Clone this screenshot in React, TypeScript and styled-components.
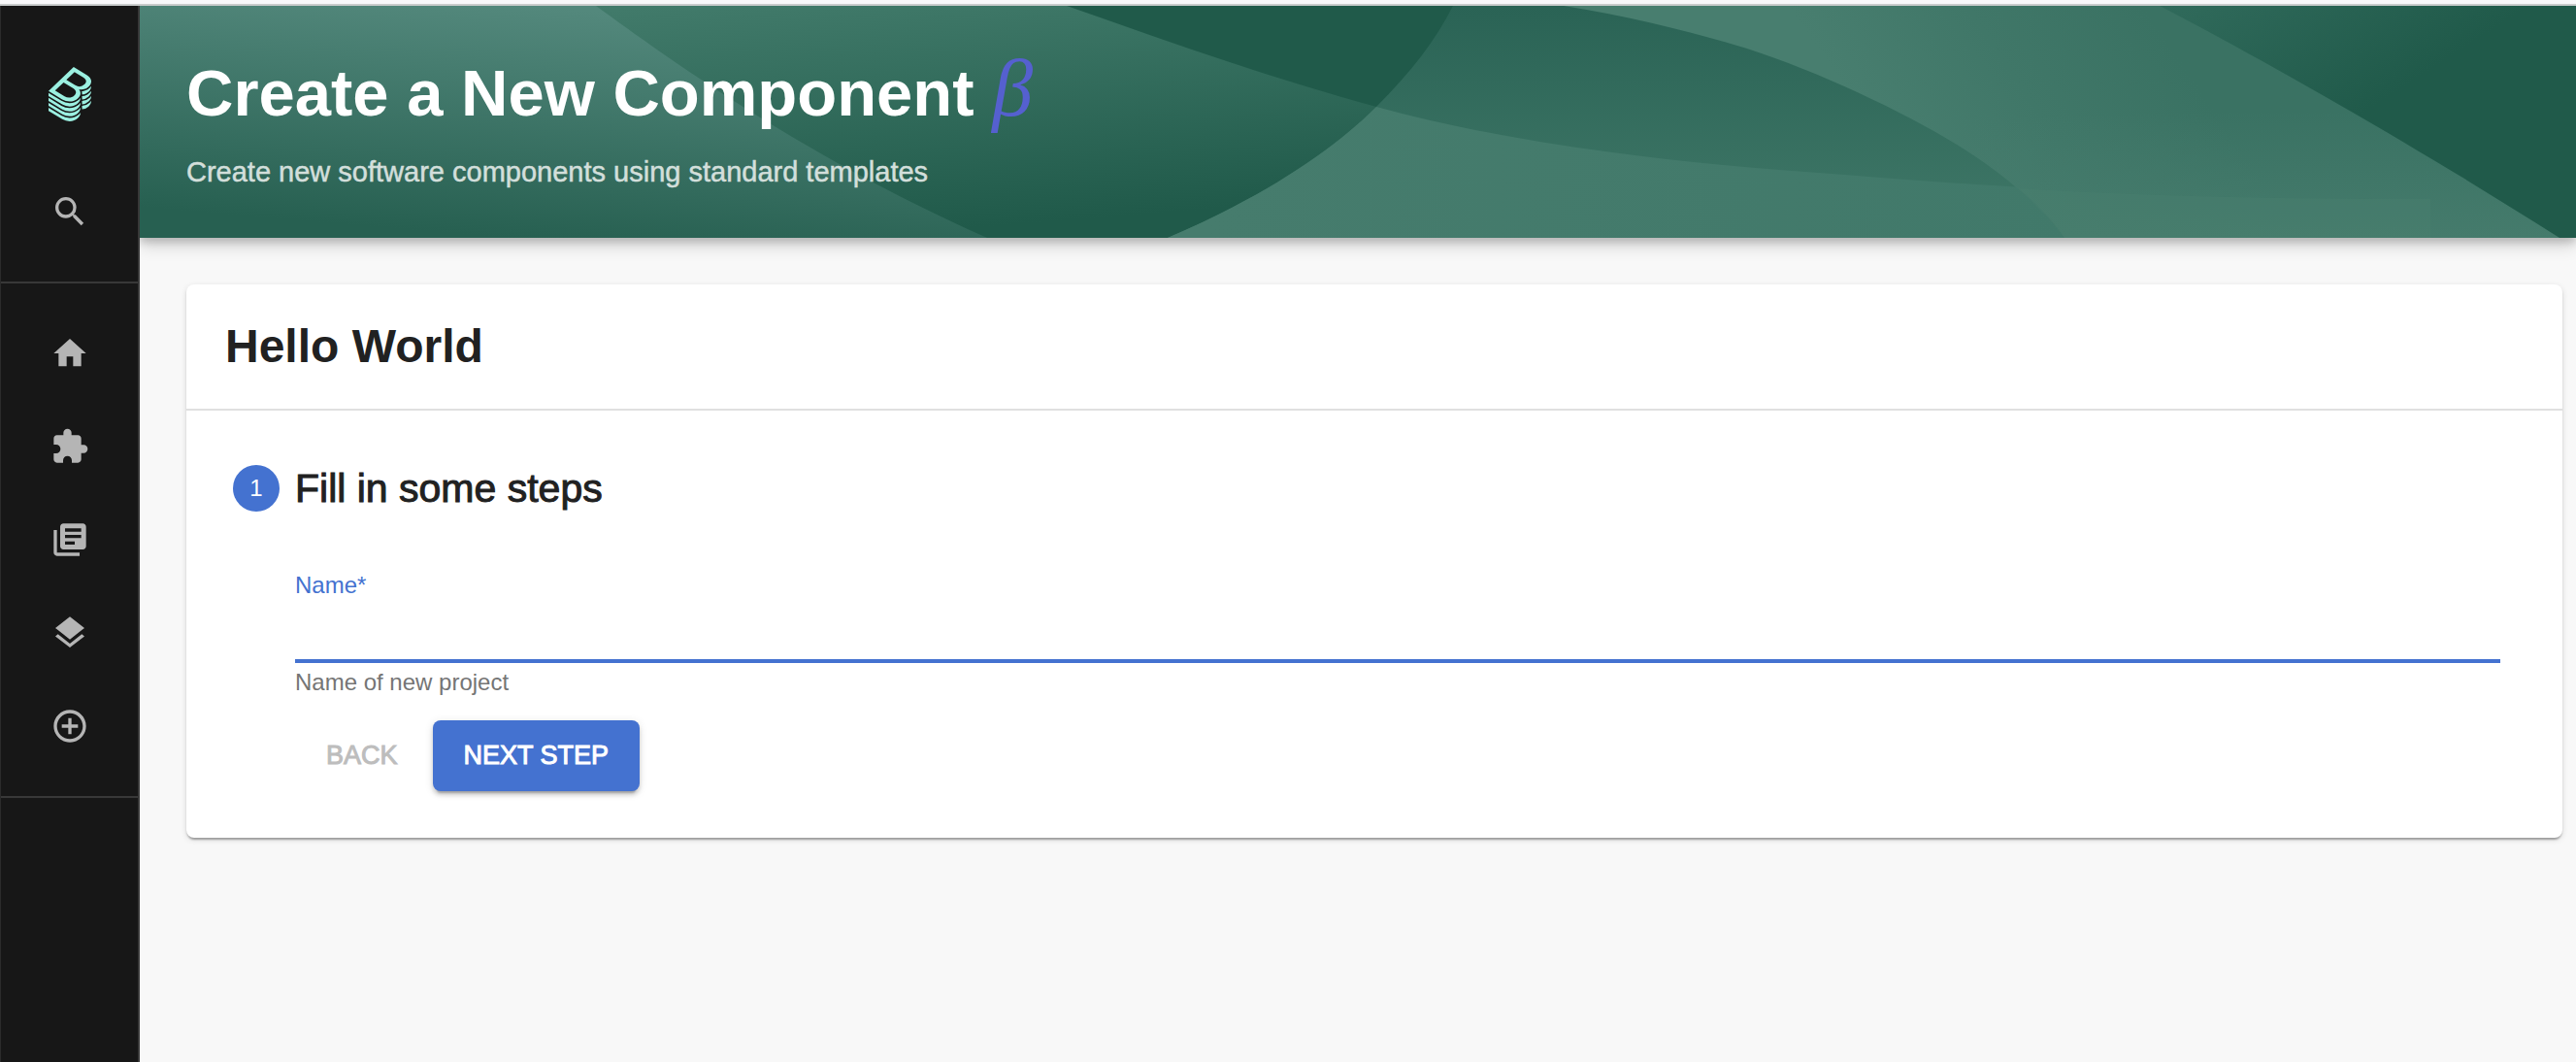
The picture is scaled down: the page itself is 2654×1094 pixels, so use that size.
import React, { useState } from "react";
import styled, { createGlobalStyle } from "styled-components";
import {
  MdSearch,
  MdHome,
  MdExtension,
  MdLibraryBooks,
  MdLayers,
  MdAddCircleOutline,
} from "react-icons/md";

const GlobalStyle = createGlobalStyle`
  * { box-sizing: border-box; }
  body {
    margin: 0;
    background: #f8f8f8;
    color: #212121;
    font-family: "Liberation Sans", Helvetica, Arial, sans-serif;
  }
`;

const Shell = styled.div`
  display: flex;
  flex-direction: column;
  min-height: 100vh;
`;

const WindowEdge = styled.div`
  height: 6px;
  background: #f8f8fa;
  border-bottom: 2px solid #c9cccc;
`;

const Layout = styled.div`
  flex: 1;
  display: flex;
`;

const Sidebar = styled.nav`
  flex: none;
  width: 144px;
  display: flex;
  flex-direction: column;
  background: #171717;
  border-left: 1px solid #2b2b2b;
  border-right: 2px solid #383838;
`;

const LogoLink = styled.a`
  display: flex;
  justify-content: center;
  height: 164px;
  padding-top: 63px;
`;

const NavList = styled.ul`
  list-style: none;
  margin: 0;
  padding: 0 0 24px;
  border-bottom: 2px solid #383838;

  & + & {
    padding-top: 24px;
  }
`;

const NavLink = styled.a`
  display: flex;
  align-items: center;
  justify-content: center;
  height: 96px;
  color: #b5b5b5;
  font-size: 40px;
`;

const Page = styled.main`
  flex: 1;
  min-width: 0;
  overflow: hidden;
`;

const Banner = styled.header`
  position: relative;
  padding: 50px 48px;
  background: #205a4a;
  box-shadow: 0 4px 8px rgba(0, 0, 0, 0.16), 0 8px 16px rgba(0, 0, 0, 0.16);
`;

const BannerArt = styled.svg`
  position: absolute;
  inset: 0;
  width: 100%;
  height: 100%;
`;

const BannerText = styled.div`
  position: relative;
  display: flex;
  flex-direction: column;
  gap: 23px;
`;

const BannerTitle = styled.h1`
  margin: 0;
  color: #fff;
  font-size: 67px;
  line-height: 80px;
  font-weight: 700;
`;

const Beta = styled.span`
  color: #5560cf;
  font: italic 400 84px/0 "Liberation Serif", "Times New Roman", serif;
`;

const BannerSubtitle = styled.p`
  margin: 0;
  color: #d3dfdb;
  font-size: 29px;
  line-height: 36px;
  -webkit-text-stroke: 0.5px currentColor;
`;

const Content = styled.div`
  padding: 48px 14px 48px 48px;
`;

const Card = styled.section`
  background: #fff;
  border-radius: 8px;
  box-shadow: 0 4px 2px -2px rgba(0, 0, 0, 0.2), 0 2px 2px rgba(0, 0, 0, 0.14),
    0 2px 6px rgba(0, 0, 0, 0.12);
`;

const CardHeader = styled.div`
  padding: 36px 40px;
  border-bottom: 2px solid #e0e0e0;
`;

const CardTitle = styled.h2`
  margin: 0;
  font-size: 48px;
  line-height: 56px;
  font-weight: 700;
`;

const Step = styled.div`
  padding: 56px 64px 48px 48px;
`;

const StepLabel = styled.div`
  display: flex;
  align-items: center;
  gap: 16px;
`;

const StepNumber = styled.span`
  width: 48px;
  height: 48px;
  border-radius: 50%;
  background: #4472d0;
  color: #fff;
  font-size: 24px;
  line-height: 48px;
  text-align: center;
`;

const StepTitle = styled.h3`
  margin: 0;
  font-size: 41px;
  line-height: 48px;
  font-weight: 400;
  -webkit-text-stroke: 1px currentColor;
`;

const StepForm = styled.form`
  display: flex;
  flex-direction: column;
  margin-left: 64px;
  padding-top: 62px;
`;

const FieldLabel = styled.label`
  color: #4472d0;
  font-size: 24px;
  line-height: 28px;
`;

const TextInput = styled.input`
  width: 100%;
  height: 66px;
  padding: 8px 0;
  border: 0;
  border-bottom: 4px solid #4472d0;
  outline: 0;
  background: none;
  color: #212121;
  font: inherit;
  font-size: 32px;
`;

const HelperText = styled.p`
  margin: 6px 0 0;
  color: #757575;
  font-size: 24px;
  line-height: 28px;
`;

const Actions = styled.div`
  display: flex;
  gap: 4px;
  margin-top: 25px;
`;

const Button = styled.button<{ $primary?: boolean }>`
  height: 73px;
  padding: 0 32px;
  border: 0;
  border-radius: 8px;
  background: ${(p) => (p.$primary ? "#4472d0" : "transparent")};
  color: ${(p) => (p.$primary ? "#fff" : "#bdbdbd")};
  box-shadow: ${(p) =>
    p.$primary
      ? "0 6px 2px -4px rgba(0,0,0,.2), 0 4px 4px rgba(0,0,0,.14), 0 2px 10px rgba(0,0,0,.12)"
      : "none"};
  font-family: inherit;
  font-size: 27px;
  text-transform: uppercase;
  -webkit-text-stroke: 1px currentColor;
`;

const Logo = () => (
  <svg width="44" height="56" viewBox="0 0 337.46 428.5" fill="#9bf0e1" aria-hidden="true">
    <path d="M303,166.05a80.69,80.69,0,0,0,13.45-10.37c.79-.77,1.55-1.53,2.3-2.3a83.12,83.12,0,0,0,7.93-9.38A63.69,63.69,0,0,0,333,133.23a48.58,48.58,0,0,0,4.35-16.4c1.49-19.39-10-38.67-35.62-54.22L198.56,0,78.3,115.23,0,190.25l108.6,65.91a111.59,111.59,0,0,0,57.76,16.41c24.92,0,48.8-8.8,66.42-25.69,19.16-18.36,25.52-42.12,13.7-61.87a49.22,49.22,0,0,0-6.8-8.87A89.17,89.17,0,0,0,259,178.29h.15a85.08,85.08,0,0,0,31-5.79A80.88,80.88,0,0,0,303,166.05ZM202.45,225.86c-19.32,18.51-50.4,21.23-75.7,5.9L51.61,186.15l67.45-64.64,76.41,46.38C223,184.58,221.49,207.61,202.45,225.86Zm8.93-82.22-70.65-42.89L205.14,39,274.51,81.1c25.94,15.72,29.31,37,10.55,55A60.69,60.69,0,0,1,211.38,143.64Zm29.86,190c-19.57,18.75-46.17,29.09-74.88,29.09a123.73,123.73,0,0,1-64.1-18.2L0,282.52v24.67L108.6,373.1a111.6,111.6,0,0,0,57.76,16.42c24.92,0,48.8-8.81,66.42-25.69,12.88-12.34,20-27.13,19.68-41.49v-1.79A87.27,87.27,0,0,1,241.24,333.68Zm0-39c-19.57,18.75-46.17,29.08-74.88,29.08a123.81,123.81,0,0,1-64.1-18.19L0,243.53v24.68l108.6,65.91a111.6,111.6,0,0,0,57.76,16.42c24.92,0,48.8-8.81,66.42-25.69,12.88-12.34,20-27.13,19.68-41.5v-1.78A87.27,87.27,0,0,1,241.24,294.7Zm0-39c-19.57,18.76-46.17,29.09-74.88,29.09a123.81,123.81,0,0,1-64.1-18.19L0,204.55v24.68l108.6,65.91a111.59,111.59,0,0,0,57.76,16.41c24.92,0,48.8-8.8,66.42-25.68,12.88-12.35,20-27.13,19.68-41.5v-1.82A86.09,86.09,0,0,1,241.24,255.71Zm83.7,25.74a94.15,94.15,0,0,1-60.2,25.86h0V334a81.6,81.6,0,0,0,51.74-22.37c14-13.38,21.14-28.11,21-42.64v-2.19A94.92,94.92,0,0,1,324.94,281.45Zm-83.7,91.21c-19.57,18.76-46.17,29.09-74.88,29.09a123.73,123.73,0,0,1-64.1-18.2L0,321.5v24.68l108.6,65.9a111.6,111.6,0,0,0,57.76,16.42c24.92,0,48.8-8.8,66.42-25.69,12.88-12.34,20-27.13,19.68-41.49v-1.79A86.29,86.29,0,0,1,241.24,372.66ZM327,162.45c-.68.69-1.35,1.38-2.05,2.06a94.37,94.37,0,0,1-10.64,8.65,91.35,91.35,0,0,1-11.6,7,94.53,94.53,0,0,1-26.24,8.71,97.69,97.69,0,0,1-14.16,1.57c.5,1.61.9,3.25,1.25,4.9a53.27,53.27,0,0,1,1.14,12V217h.05a84.41,84.41,0,0,0,25.35-5.55,81,81,0,0,0,26.39-16.82c.8-.77,1.5-1.56,2.26-2.34a82.08,82.08,0,0,0,7.93-9.38A63.76,63.76,0,0,0,333,172.17a48.55,48.55,0,0,0,4.32-16.45c.09-1.23.2-2.47.19-3.7V150q-1.08,1.54-2.25,3.09A96.73,96.73,0,0,1,327,162.45Zm0,77.92c-.69.7-1.31,1.41-2,2.1a94.2,94.2,0,0,1-60.2,25.86h0V295h0a81.65,81.65,0,0,0,51.74-22.37,73.51,73.51,0,0,0,16.48-22.86,48.56,48.56,0,0,0,4.32-16.44c.09-1.24.2-2.47.19-3.7v-2.19c-.74,1.07-1.46,2.15-2.27,3.21A94.68,94.68,0,0,1,327,240.37Zm0-39c-.69.7-1.31,1.41-2,2.1a93.18,93.18,0,0,1-10.63,8.65,91.63,91.63,0,0,1-11.63,7,95.47,95.47,0,0,1-37.94,10.18h0V256h0a81.65,81.65,0,0,0,51.74-22.37,73.51,73.51,0,0,0,16.48-22.85A48.56,48.56,0,0,0,337.39,194.37c.09-1.24.2-2.48.19-3.71v-2.19c-.74,1.07-1.46,2.15-2.27,3.21A96,96,0,0,1,327,201.43Z" />
  </svg>
);

const BannerWaves = () => (
  <BannerArt viewBox="0 0 2510 239" preserveAspectRatio="none" aria-hidden="true">
    <defs>
      <linearGradient id="slope" gradientUnits="userSpaceOnUse" x1="700" y1="-20" x2="720" y2="239">
        <stop offset="0" stopColor="#427b6b" />
        <stop offset="1" stopColor="#205a4a" />
      </linearGradient>
      <linearGradient id="sheet" gradientUnits="userSpaceOnUse" x1="400" y1="0" x2="380" y2="239">
        <stop offset="0" stopColor="#53887c" />
        <stop offset="1" stopColor="#276051" />
      </linearGradient>
      <linearGradient id="hill" x1="0" y1="0" x2="0" y2="1">
        <stop offset="0" stopColor="#2a6355" />
        <stop offset="1" stopColor="#407868" />
      </linearGradient>
      <linearGradient id="floor" gradientUnits="userSpaceOnUse" x1="1100" y1="0" x2="2000" y2="0">
        <stop offset="0" stopColor="#467c6d" />
        <stop offset="1" stopColor="#41796a" />
      </linearGradient>
      <linearGradient id="arc" gradientUnits="userSpaceOnUse" x1="1760" y1="90" x2="2010" y2="-80">
        <stop offset="0" stopColor="#487e6f" />
        <stop offset="0.5" stopColor="#407768" />
        <stop offset="1" stopColor="#3a7263" />
      </linearGradient>
      <linearGradient id="fade" gradientUnits="userSpaceOnUse" x1="0" y1="110" x2="0" y2="239">
        <stop offset="0" stopColor="#457b6c" stopOpacity="0" />
        <stop offset="1" stopColor="#457b6c" />
      </linearGradient>
      <linearGradient id="corner" gradientUnits="userSpaceOnUse" x1="2120" y1="-20" x2="2230" y2="150">
        <stop offset="0" stopColor="#306a5b" />
        <stop offset="1" stopColor="#205a4a" />
      </linearGradient>
    </defs>
    <path fill="url(#slope)" d="M0 0H955C1060 37 1170 76 1274 104C1230 148 1160 196 1059 239H0Z" />
    <path fill="url(#sheet)" d="M0 0H470C555 62 690 158 873 239H0Z" />
    <path fill="url(#hill)" d="M1353 0H2510V239H1059C1160 196 1230 148 1274 104C1309 69 1335 36 1353 0Z" />
    <path
      fill="url(#floor)"
      d="M1274 104C1420 144 1590 163 1756 174C1900 186 2100 198 2360 199V239H1059C1160 196 1230 148 1274 104Z"
    />
    <path
      fill="url(#arc)"
      d="M1467 0H2510V239H1983C1962 210 1925 176 1874 144C1815 108 1730 68 1656 44C1600 27 1540 12 1467 0Z"
    />
    <path fill="url(#fade)" d="M2510 100V239H1983C1962 210 1925 176 1874 144L1830 118Z" />
    <path fill="#4a8071" opacity="0.35" d="M1935 188C2060 196 2200 199 2360 199V239H1983C1970 220 1953 202 1935 188Z" />
    <path fill="url(#corner)" d="M2081 0H2510V239H2493C2350 148 2200 62 2081 0Z" />
  </BannerArt>
);

const navItems = [
  { label: "Home", icon: <MdHome /> },
  { label: "Explore", icon: <MdExtension /> },
  { label: "Docs", icon: <MdLibraryBooks /> },
  { label: "Layers", icon: <MdLayers /> },
  { label: "Create", icon: <MdAddCircleOutline /> },
];

export default function App() {
  const [name, setName] = useState("");

  return (
    <>
      <GlobalStyle />
      <Shell>
        <WindowEdge />
        <Layout>
          <Sidebar aria-label="Main">
            <LogoLink href="#" aria-label="Backstage">
              <Logo />
            </LogoLink>
            <NavList>
              <li>
                <NavLink href="#search" aria-label="Search">
                  <MdSearch />
                </NavLink>
              </li>
            </NavList>
            <NavList>
              {navItems.map((item) => (
                <li key={item.label}>
                  <NavLink href={`#${item.label.toLowerCase()}`} aria-label={item.label}>
                    {item.icon}
                  </NavLink>
                </li>
              ))}
            </NavList>
          </Sidebar>
          <Page>
            <Banner>
              <BannerWaves />
              <BannerText>
                <BannerTitle>
                  Create a New Component <Beta>β</Beta>
                </BannerTitle>
                <BannerSubtitle>
                  Create new software components using standard templates
                </BannerSubtitle>
              </BannerText>
            </Banner>
            <Content>
              <Card>
                <CardHeader>
                  <CardTitle>Hello World</CardTitle>
                </CardHeader>
                <Step>
                  <StepLabel>
                    <StepNumber>1</StepNumber>
                    <StepTitle>Fill in some steps</StepTitle>
                  </StepLabel>
                  <StepForm onSubmit={(e) => e.preventDefault()}>
                    <FieldLabel htmlFor="name">Name*</FieldLabel>
                    <TextInput
                      id="name"
                      required
                      aria-describedby="name-help"
                      value={name}
                      onChange={(e) => setName(e.target.value)}
                    />
                    <HelperText id="name-help">Name of new project</HelperText>
                    <Actions>
                      <Button type="button" disabled>
                        Back
                      </Button>
                      <Button type="submit" $primary>
                        Next step
                      </Button>
                    </Actions>
                  </StepForm>
                </Step>
              </Card>
            </Content>
          </Page>
        </Layout>
      </Shell>
    </>
  );
}
